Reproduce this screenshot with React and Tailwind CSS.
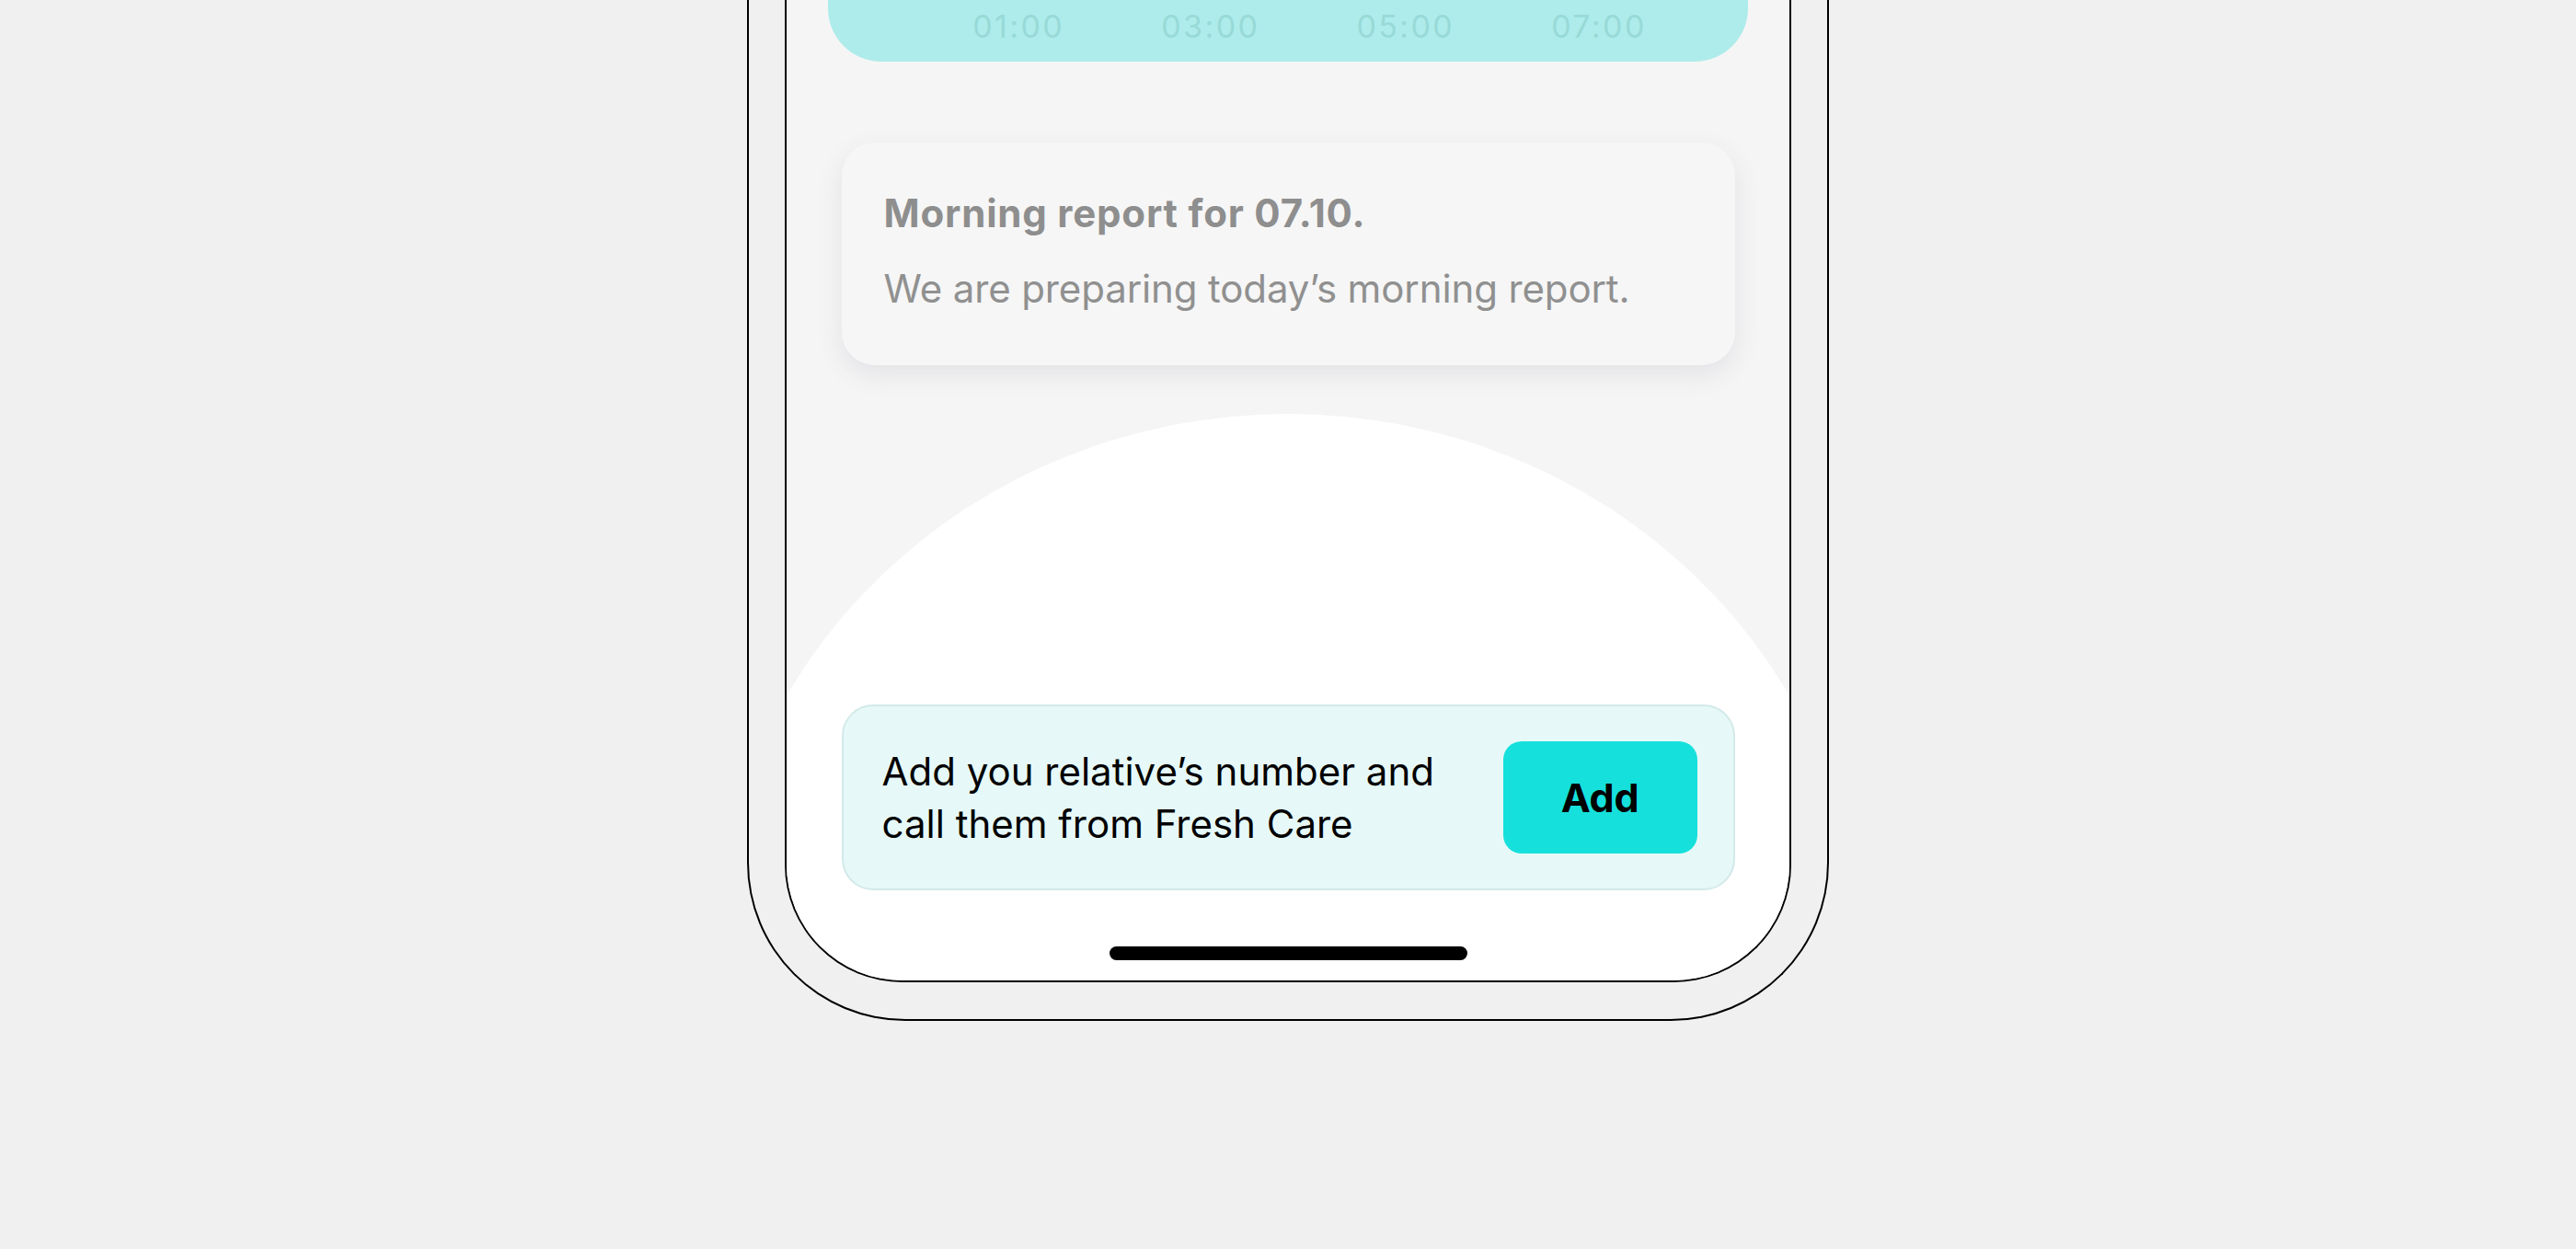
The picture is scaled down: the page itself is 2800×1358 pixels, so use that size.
import React from 'react';

const hours = ['01:00', '03:00', '05:00', '07:00'];

const SleepChartTail = () => (
    <div className="mx-auto w-[1000px] h-[140px] rounded-b-[58px] bg-[#aeeceb] flex items-end justify-center gap-[105px] pb-[21px] pl-[47px]">
        {hours.map((h) => (
            <span key={h} className="text-[34px] leading-none text-[#98dad7] tracking-[2.4px]">{h}</span>
        ))}
    </div>
);

const MorningReport = () => (
    <div className="mx-auto mt-[88px] w-[971px] h-[242px] rounded-[36px] bg-[#f6f6f6] shadow-[0_10px_28px_rgba(70,70,110,0.10)] pl-[46px] pt-[52px]">
        <p className="text-[42px] leading-[50px] font-bold text-[#8e8e8e] tracking-[0.8px]">Morning report for 07.10.</p>
        <p className="mt-[32px] text-[42px] leading-[50px] text-[#909090] tracking-[-0.12px]">We are preparing today’s morning report.</p>
    </div>
);

const AddRelative = () => (
    <div className="relative mx-auto w-[971px] h-[202px] rounded-[34px] border-2 border-[#d3e9e9] bg-[#e6f9f8] flex items-center justify-between pl-[42px] pr-[39px]">
        <p className="text-[42px] leading-[57px] text-black w-[620px]">
            Add you relative’s number and call them from Fresh Care
        </p>
        <button className="w-[211px] h-[122px] rounded-[20px] bg-[#16e0dc] text-[43px] font-bold text-black tracking-[-0.3px]">
            Add
        </button>
    </div>
);

export default function App() {
    return (
        <div className="h-[1358px] overflow-hidden bg-[#f0f0f0] flex flex-col items-center justify-end pb-[248px]" style={{ fontFamily: 'Inter, "Noto Sans", sans-serif' }}>
            {/* phone body */}
            <div className="w-[1176px] border-2 border-t-0 border-black rounded-b-[172px] px-[40px] pb-[40px] flex flex-col items-center justify-end">
                {/* screen */}
                <div className="relative w-[1094px] border-2 border-t-0 border-black rounded-b-[128px] overflow-hidden bg-[#f5f5f5] flex flex-col">
                    <SleepChartTail />
                    <MorningReport />

                    <div className="relative mt-[32px] pt-[337px] pb-[22px] flex flex-col items-center">
                        <div className="absolute left-1/2 top-[21px] -translate-x-1/2 w-[1250px] h-[1200px] rounded-[50%] bg-white" />
                        <AddRelative />
                        <div className="relative mt-[61px] w-[389px] h-[15px] rounded-full bg-black" />
                    </div>
                </div>
            </div>
        </div>
    );
}
